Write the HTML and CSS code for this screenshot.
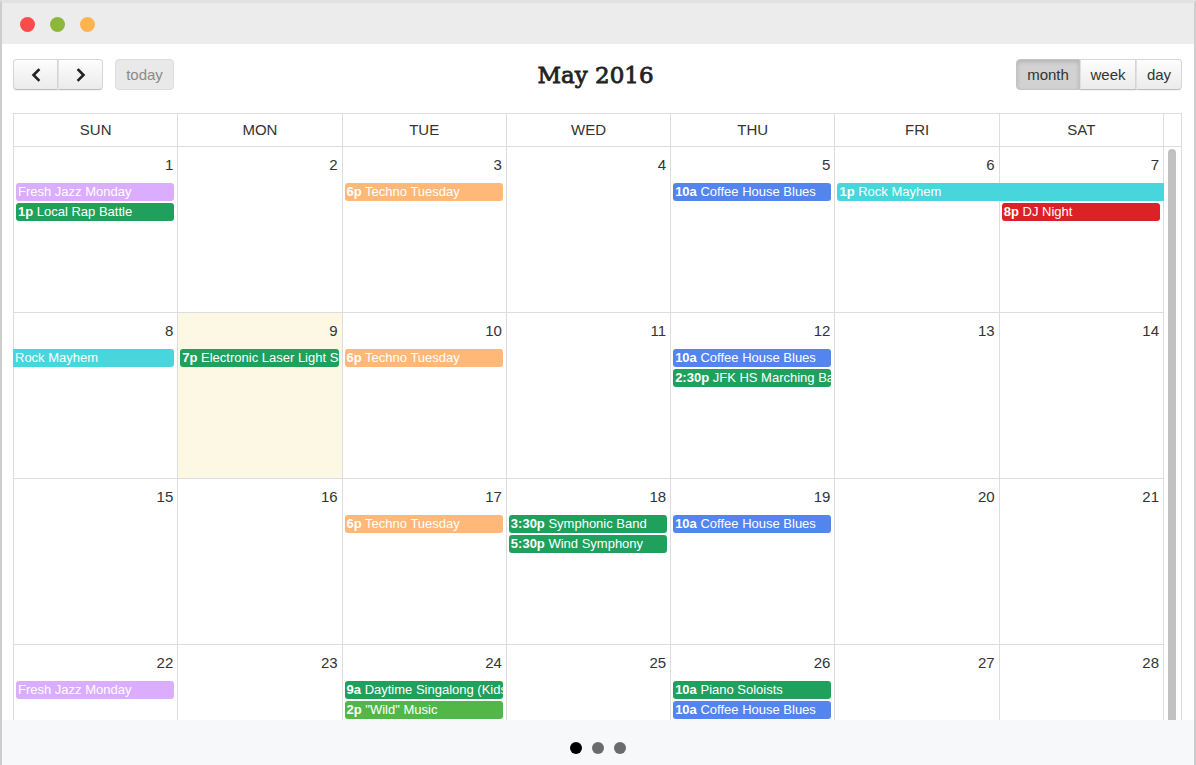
FILE: index.html
```html
<!DOCTYPE html>
<html>
<head>
<meta charset="utf-8">
<link rel="stylesheet" href="styles.css">
</head>
<body>
<div class="window">
  <div class="titlebar">
    <span class="light red"></span>
    <span class="light green"></span>
    <span class="light orange"></span>
  </div>
  <div class="content">
    <div class="toolbar">
      <div class="tb-left">
        <div class="btn-group">
          <button class="btn icon-btn"><svg width="12" height="14" viewBox="0 0 12 14"><polyline points="8.5,2 3.5,7 8.5,12" fill="none" stroke="#222" stroke-width="2.6" stroke-linecap="square"/></svg></button>
          <button class="btn icon-btn"><svg width="12" height="14" viewBox="0 0 12 14"><polyline points="3.5,2 8.5,7 3.5,12" fill="none" stroke="#222" stroke-width="2.6" stroke-linecap="square"/></svg></button>
        </div>
        <button class="btn disabled">today</button>
      </div>
      <h2 class="title">May 2016</h2>
      <div class="tb-right">
        <div class="btn-group">
          <button class="btn active">month</button>
          <button class="btn">week</button>
          <button class="btn">day</button>
        </div>
      </div>
    </div>

    <div class="cal">
      <div class="head">
        <div class="hcell">SUN</div>
        <div class="hcell">MON</div>
        <div class="hcell">TUE</div>
        <div class="hcell">WED</div>
        <div class="hcell">THU</div>
        <div class="hcell">FRI</div>
        <div class="hcell">SAT</div>
        <div class="hgutter"></div>
      </div>
      <div class="body">
        <div class="weeks">
          <div class="week">
            <div class="day c1"><div class="num">1</div></div>
            <div class="day c2"><div class="num">2</div></div>
            <div class="day c3"><div class="num">3</div></div>
            <div class="day c4"><div class="num">4</div></div>
            <div class="day c5"><div class="num">5</div></div>
            <div class="day c6"><div class="num">6</div></div>
            <div class="day c7"><div class="num">7</div></div>
            <div class="ev purple c1 r1">Fresh Jazz Monday</div>
            <div class="ev dgreen c1 r2"><b>1p</b> Local Rap Battle</div>
            <div class="ev orange c3 r1"><b>6p</b> Techno Tuesday</div>
            <div class="ev blue c5 r1"><b>10a</b> Coffee House Blues</div>
            <div class="ev cyan c6s2 r1 open-end"><b>1p</b> Rock Mayhem</div>
            <div class="ev red c7 r2"><b>8p</b> DJ Night</div>
          </div>
          <div class="week">
            <div class="day c1"><div class="num">8</div></div>
            <div class="day c2 today"><div class="num">9</div></div>
            <div class="day c3"><div class="num">10</div></div>
            <div class="day c4"><div class="num">11</div></div>
            <div class="day c5"><div class="num">12</div></div>
            <div class="day c6"><div class="num">13</div></div>
            <div class="day c7"><div class="num">14</div></div>
            <div class="ev cyan c1 r1 open-start">Rock Mayhem</div>
            <div class="ev dgreen c2 r1"><b>7p</b> Electronic Laser Light Show</div>
            <div class="ev orange c3 r1"><b>6p</b> Techno Tuesday</div>
            <div class="ev blue c5 r1"><b>10a</b> Coffee House Blues</div>
            <div class="ev dgreen c5 r2"><b>2:30p</b> JFK HS Marching Band</div>
          </div>
          <div class="week">
            <div class="day c1"><div class="num">15</div></div>
            <div class="day c2"><div class="num">16</div></div>
            <div class="day c3"><div class="num">17</div></div>
            <div class="day c4"><div class="num">18</div></div>
            <div class="day c5"><div class="num">19</div></div>
            <div class="day c6"><div class="num">20</div></div>
            <div class="day c7"><div class="num">21</div></div>
            <div class="ev orange c3 r1"><b>6p</b> Techno Tuesday</div>
            <div class="ev dgreen c4 r1"><b>3:30p</b> Symphonic Band</div>
            <div class="ev dgreen c4 r2"><b>5:30p</b> Wind Symphony</div>
            <div class="ev blue c5 r1"><b>10a</b> Coffee House Blues</div>
          </div>
          <div class="week">
            <div class="day c1"><div class="num">22</div></div>
            <div class="day c2"><div class="num">23</div></div>
            <div class="day c3"><div class="num">24</div></div>
            <div class="day c4"><div class="num">25</div></div>
            <div class="day c5"><div class="num">26</div></div>
            <div class="day c6"><div class="num">27</div></div>
            <div class="day c7"><div class="num">28</div></div>
            <div class="ev purple c1 r1">Fresh Jazz Monday</div>
            <div class="ev dgreen c3 r1"><b>9a</b> Daytime Singalong (Kids)</div>
            <div class="ev lgreen c3 r2"><b>2p</b> "Wild" Music</div>
            <div class="ev dgreen c5 r1"><b>10a</b> Piano Soloists</div>
            <div class="ev blue c5 r2"><b>10a</b> Coffee House Blues</div>
          </div>
        </div>
        <div class="gutter"><div class="thumb"></div></div>
      </div>
    </div>
  </div>
  <div class="footer">
    <span class="dot on"></span>
    <span class="dot"></span>
    <span class="dot"></span>
  </div>
</div>
</body>
</html>
```

FILE: styles.css
```css
* { box-sizing: border-box; }
html, body { margin: 0; padding: 0; background: #fff; }
body { font-family: "Liberation Sans", Arial, sans-serif; color: #333; }

.window {
  width: 1196px;
  height: 765px;
  display: flex;
  flex-direction: column;
  overflow: hidden;
  border-left: 2px solid #cdcdcd;
  border-right: 2px solid #cdcdcd;
  border-top: 3px solid #e2e2e2;
  background: #fff;
}

.titlebar {
  height: 41px;
  flex: none;
  background: #ececec;
  display: flex;
  align-items: center;
  gap: 15px;
  padding-left: 18px;
  padding-top: 1px;
}
.light { width: 15px; height: 15px; border-radius: 50%; display: block; }
.light.red { background: #fc4b4b; }
.light.green { background: #8cb83a; }
.light.orange { background: #fdb44e; }

.content {
  flex: 1;
  min-height: 0;
  overflow: hidden;
  padding: 15px 12px 0 11px;
}

.toolbar {
  display: grid;
  grid-template-columns: 1fr auto 1fr;
  align-items: center;
  height: 31px;
  margin-bottom: 23px;
}
.tb-left { display: flex; gap: 12px; }
.tb-right { display: flex; justify-content: flex-end; }
.btn-group { display: flex; }

.btn {
  height: 31px;
  font-family: "Liberation Sans", Arial, sans-serif;
  font-size: 15px;
  color: #333;
  padding: 0 10px;
  border: 1px solid #d6d6d6;
  border-bottom-color: #bdbdbd;
  background: linear-gradient(#fdfdfd, #ebebeb);
  box-shadow: inset 0 1px 0 rgba(255,255,255,.6), 0 1px 1px rgba(0,0,0,.05);
  border-radius: 4px;
  margin: 0;
  display: flex;
  align-items: center;
  justify-content: center;
}
.btn-group .btn { border-radius: 0; }
.btn-group .btn + .btn { border-left-color: #e0e0e0; }
.btn-group .btn:first-child { border-radius: 4px 0 0 4px; }
.btn-group .btn:last-child { border-radius: 0 4px 4px 0; }
.icon-btn { width: 45px; padding: 0; }
.btn.disabled {
  background: #e9e9e9;
  color: #8a8a8a;
  border-color: #dcdcdc;
  box-shadow: none;
  width: 59px;
}
.btn.active {
  background: #d2d2d2;
  border-color: #c4c4c4;
  box-shadow: inset 0 2px 4px rgba(0,0,0,.15);
  width: 64px;
}
.tb-right .btn:nth-child(2) { width: 56px; }
.tb-right .btn:nth-child(3) { width: 46px; }

.title {
  margin: 0;
  font-family: "DejaVu Serif", "Liberation Serif", serif;
  font-weight: normal;
  font-size: 23px;
  color: #222;
  -webkit-text-stroke: 0.8px #222;
  line-height: 30px;
  padding-right: 4px;
}

.cal {
  border: 1px solid #ddd;
  border-bottom: none;
}
.head {
  display: grid;
  grid-template-columns: repeat(7, minmax(0, 1fr)) 17px;
  border-bottom: 1px solid #ddd;
}
.hcell {
  text-align: center;
  font-size: 15px;
  line-height: 32px;
  border-right: 1px solid #ddd;
  color: #333;
}

.body { display: flex; }
.weeks { flex: 1; min-width: 0; }
.gutter { width: 17px; flex: none; padding: 2px 0 0 4px; }
.thumb {
  width: 8px;
  height: 640px;
  background: #c1c1c1;
  border-radius: 4px;
}

.week {
  display: grid;
  grid-template-columns: repeat(7, minmax(0, 1fr));
  grid-template-rows: 36px 20px 20px 1fr;
  height: 166px;
  border-bottom: 1px solid #ddd;
}
.day {
  grid-row: 1 / -1;
  border-right: 1px solid #ddd;
}
.day.today { background: #fcf8e3; }
.num {
  text-align: right;
  font-size: 15px;
  line-height: 18px;
  padding: 9px 4px 0 0;
  color: #333;
}

.c1 { grid-column: 1; }
.c2 { grid-column: 2; }
.c3 { grid-column: 3; }
.c4 { grid-column: 4; }
.c5 { grid-column: 5; }
.c6 { grid-column: 6; }
.c7 { grid-column: 7; }
.c6s2 { grid-column: 6 / 8; }
.r1 { grid-row: 2; }
.r2 { grid-row: 3; }

.ev {
  align-self: start;
  height: 18px;
  line-height: 18px;
  font-size: 13px;
  color: #fff;
  border-radius: 3px;
  margin: 0 4px 0 2px;
  padding: 0 2px;
  white-space: nowrap;
  overflow: hidden;
}
.ev b { font-weight: bold; }
.ev.open-end { margin-right: 0; border-radius: 3px 0 0 3px; }
.ev.open-start { margin-left: -1px; border-radius: 0 3px 3px 0; padding-left: 2px; }

.purple { background: #dbadff; }
.dgreen { background: #1fa05d; }
.lgreen { background: #51b749; }
.orange { background: #ffb878; }
.blue { background: #5484ed; }
.cyan { background: #46d6db; }
.red { background: #dc2127; }

.footer {
  height: 45px;
  flex: none;
  background: #f7f8fa;
  display: flex;
  justify-content: center;
  align-items: center;
  gap: 10px;
  padding-top: 10px;
}
.dot { width: 12px; height: 12px; border-radius: 50%; background: #6b6b6b; display: block; }
.dot.on { background: #000; }
```
